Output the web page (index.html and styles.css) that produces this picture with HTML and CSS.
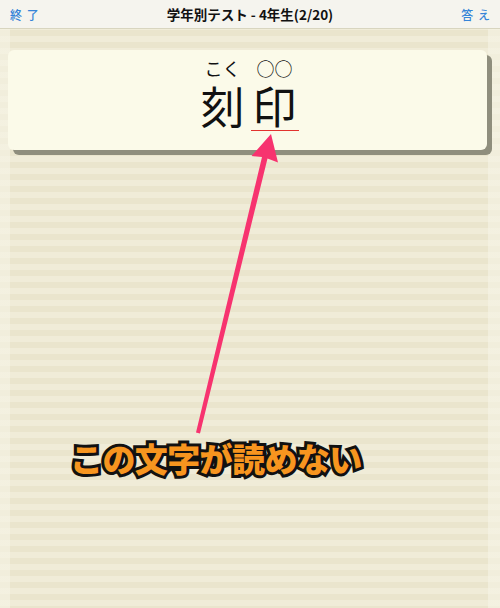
FILE: index.html
```html
<!DOCTYPE html>
<html lang="ja">
<head>
<meta charset="utf-8">
<link rel="stylesheet" href="styles.css">
</head>
<body>
<div class="page">
  <header class="nav">
    <span class="nav-btn">終 了</span>
    <span class="nav-title">学年別テスト - 4年生(2/20)</span>
    <span class="nav-btn">答 え</span>
  </header>
  <main class="main">
    <div class="card">
      <div class="word">
        <div class="col">
          <span class="ruby">こく</span>
          <span class="kanji">刻</span>
        </div>
        <div class="col">
          <span class="ruby">○○</span>
          <span class="kanji target">印</span>
        </div>
      </div>
    </div>
  </main>
  <svg class="arrow" width="500" height="608" viewBox="0 0 500 608">
    <polygon points="271,134 278,162.5 267.5,158.5 200,433.5 196,432.5 262,157 251.5,156" fill="#f7336f"/>
  </svg>
  <div class="callout">この文字が読めない</div>
</div>
</body>
</html>
```
FILE: styles.css
```css
html, body {
  margin: 0;
  padding: 0;
}
body {
  width: 500px;
  height: 608px;
  overflow: hidden;
  font-family: "Noto Sans CJK JP", "Liberation Sans", sans-serif;
}
.page {
  position: relative;
  width: 500px;
  height: 608px;
  display: flex;
  flex-direction: column;
  background:
    linear-gradient(90deg, rgba(246,244,230,0.6) 0, rgba(246,244,230,0.6) 10px, transparent 10px, transparent 488px, rgba(246,244,230,0.6) 488px),
    repeating-linear-gradient(180deg, #f0ecd8 0, #f0ecd8 6px, #eae5cd 6px, #eae5cd 12px);
}
.nav {
  height: 28px;
  flex: none;
  display: flex;
  align-items: center;
  justify-content: space-between;
  padding: 0 10px;
  background: #f5f4ee;
  border-bottom: 1px solid #d8d5bf;
}
.nav-btn {
  color: #3584d8;
  font-size: 12px;
  font-weight: 500;
  width: 60px;
  word-spacing: 2px;
}
.nav-btn:last-child {
  text-align: right;
}
.nav-title {
  font-size: 13.5px;
  font-weight: 700;
  color: #111;
}
.main {
  padding: 21px 13px 0 8px;
}
.card {
  height: 100px;
  background: #fbfae9;
  border-radius: 6px;
  box-shadow: 5px 5px 0 #8f8e7d;
  display: flex;
  justify-content: center;
  padding-top: 6px;
  box-sizing: border-box;
}
.word {
  display: flex;
  gap: 6px;
  padding-left: 4px;
}
.col {
  display: flex;
  flex-direction: column;
  align-items: center;
}
.ruby {
  font-size: 18px;
  line-height: 24px;
  color: #111;
}
.kanji {
  font-size: 44px;
  line-height: 50px;
  font-weight: 400;
  color: #111;
}
.target {
  padding: 0 2px;
  border-bottom: 1.5px solid #e2322e;
}
.arrow {
  position: absolute;
  left: 0;
  top: 0;
  pointer-events: none;
}
.callout {
  position: absolute;
  left: 70px;
  top: 436px;
  font-size: 33px;
  font-weight: 900;
  color: #f7951f;
  line-height: 44px;
  -webkit-text-stroke: 6px #111;
  paint-order: stroke fill;
  letter-spacing: -0.6px;
}
```
